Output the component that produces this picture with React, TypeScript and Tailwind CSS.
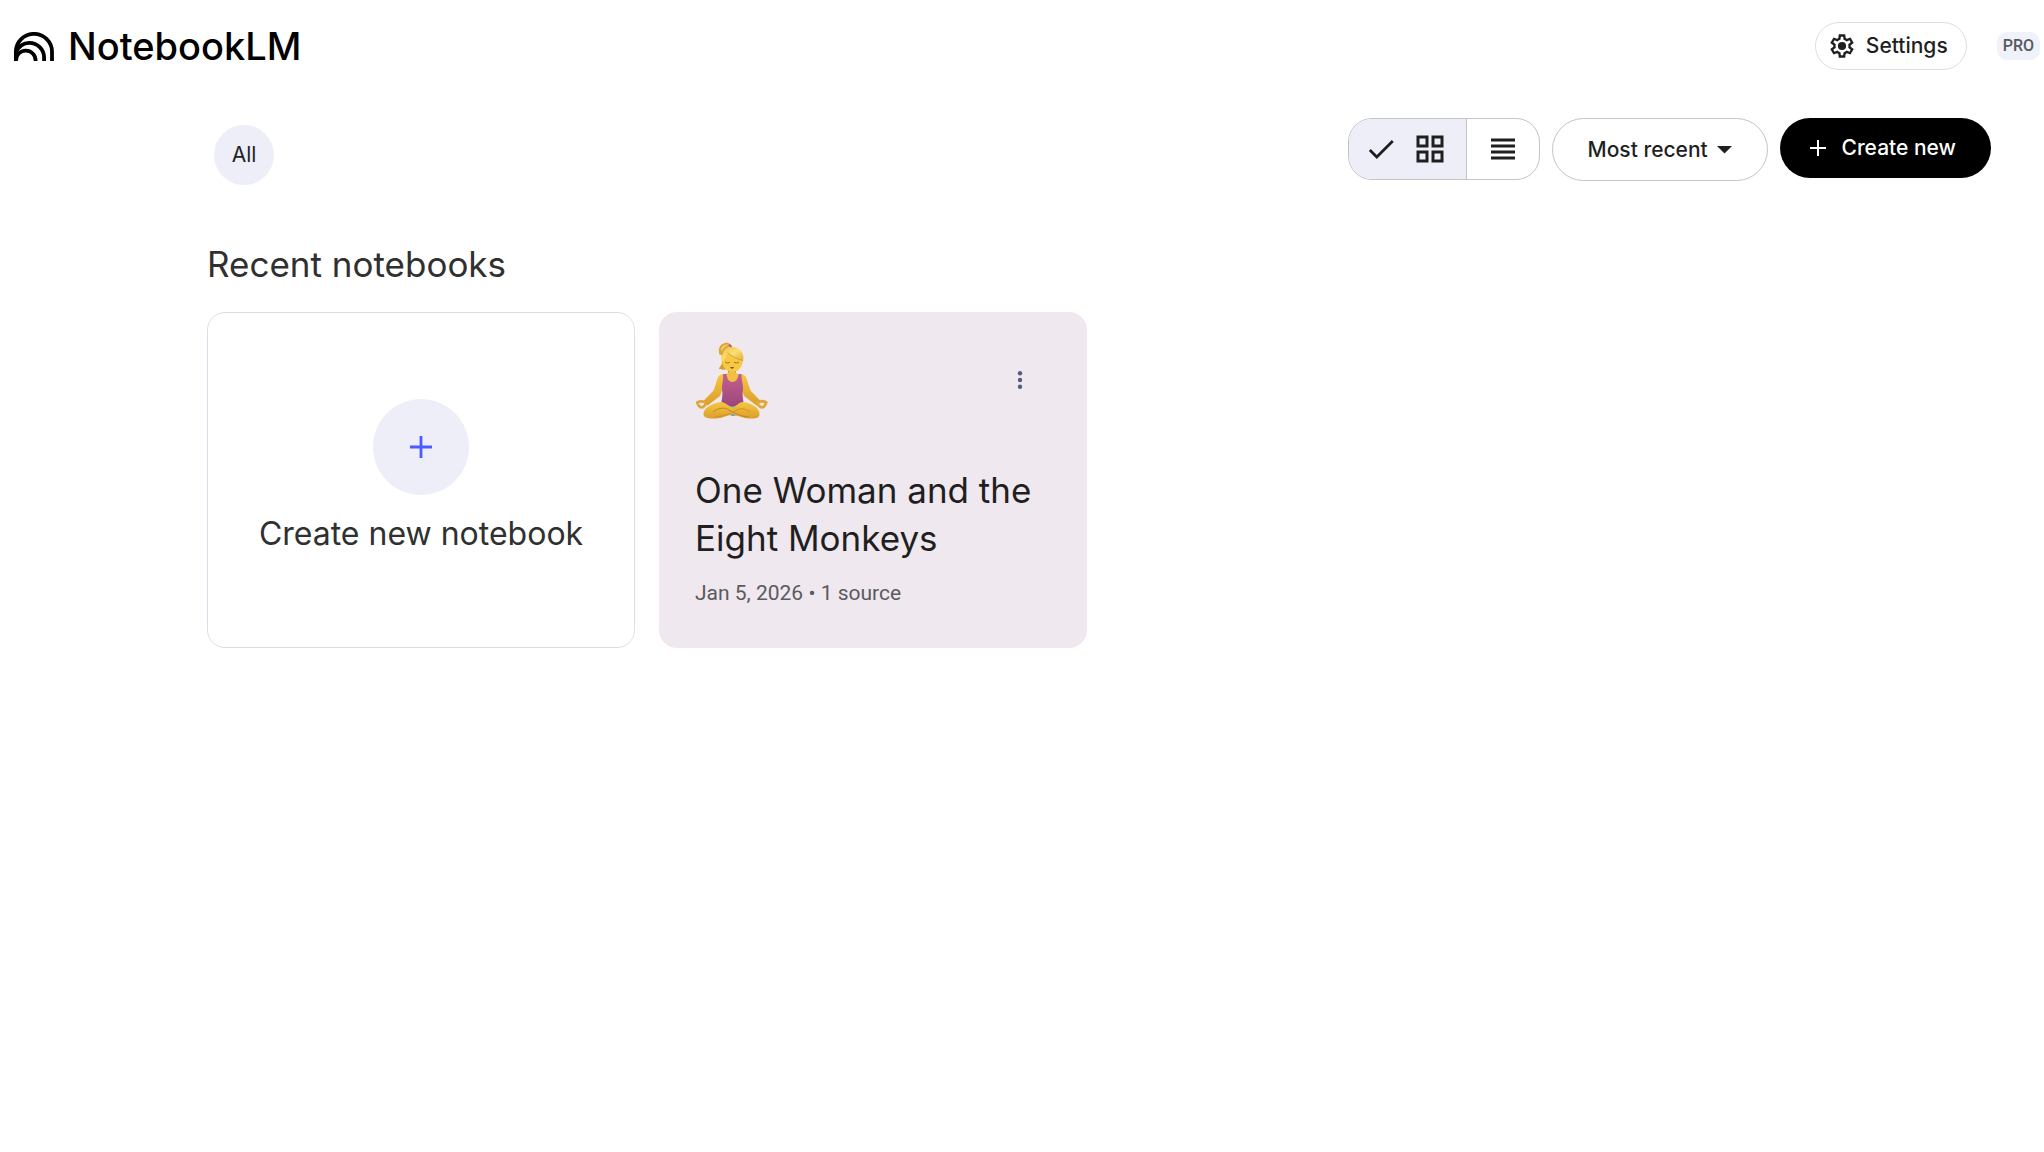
import { useState } from 'react'

interface Notebook {
  title: string
  date: string
  sources: string
}

const notebooks: Notebook[] = [
  { title: 'One Woman and the Eight Monkeys', date: 'Jan 5, 2026', sources: '1 source' },
]

function LogoMark() {
  return (
    <svg width="40" height="29" viewBox="0 0 40 29" fill="none" stroke="currentColor" strokeWidth="3.8" aria-hidden="true">
      <path d="M1.9 29V19.6A18 17.7 0 0 1 38 19.6V29" />
      <path d="M1.9 20.5C4.5 14.5 9.6 10.8 15.3 10.8A14.8 14.8 0 0 1 30.1 25.6V29" />
      <path d="M1.9 29C1.9 23 6 18.6 11.8 18.6A9.8 9.8 0 0 1 21.6 28.4V29" />
    </svg>
  )
}

function GearIcon() {
  return (
    <svg width="28" height="28" viewBox="0 -960 960 960" fill="currentColor" aria-hidden="true">
      <path d="m370-80-16-128q-13-5-24.5-12T307-235l-119 50L78-375l103-78q-1-7-1-13.5v-27q0-6.5 1-13.5L78-585l110-190 119 50q11-8 23-15t24-12l16-128h220l16 128q13 5 24.5 12t22.5 15l119-50 110 190-103 78q1 7 1 13.5v27q0 6.5-2 13.5l103 78-110 190-118-50q-11 8-23 15t-24 12L590-80H370Zm70-80h79l14-106q31-8 57.5-23.5T639-327l99 41 39-68-86-65q5-14 7-29.5t2-31.5q0-16-2-31.5t-7-29.5l86-65-39-68-99 42q-22-23-48.5-38.5T533-694l-13-106h-79l-14 106q-31 8-57.5 23.5T321-633l-99-41-39 68 86 64q-5 15-7 30t-2 32q0 16 2 31t7 30l-86 65 39 68 99-42q22 23 48.5 38.5T427-266l13 106Z" />
      <circle cx="480" cy="-480" r="140" />
    </svg>
  )
}

function LotusEmoji() {
  return (
    <svg width="74" height="78" viewBox="0 0 74 78" role="img" aria-label="Woman in lotus position">
      <defs>
        <linearGradient id="skin" x1="0" y1="0" x2="0" y2="1">
          <stop offset="0" stopColor="#f5c842" />
          <stop offset="1" stopColor="#dd9d2b" />
        </linearGradient>
        <linearGradient id="hair" x1="0" y1="0" x2="1" y2="1">
          <stop offset="0" stopColor="#e8bd48" />
          <stop offset="0.5" stopColor="#fbdf74" />
          <stop offset="1" stopColor="#e2ab35" />
        </linearGradient>
        <linearGradient id="top" x1="0" y1="0" x2="0" y2="1">
          <stop offset="0" stopColor="#c2608f" />
          <stop offset="1" stopColor="#9d467c" />
        </linearGradient>
      </defs>
      {/* ponytail and neck */}
      <path d="M27 17C28 22 26 25 23.7 27.5C26 29 29.5 29 31.5 28L32 20Z" fill="#d59c30" />
      <path d="M33 28V34H41V28Z" fill="#d9992c" />
      {/* arms */}
      <path d="M28.5 33C24 33.5 22.5 36 21.5 41L18.5 49.5L8 60.5L12.5 64.5L25 55L29 44Z" fill="url(#skin)" />
      <path d="M45.5 33C50 33.5 51.5 36 52.5 41L55.5 49.5L66 60.5L61.5 64.5L49 55L45 44Z" fill="url(#skin)" />
      <path d="M28 33Q33 33 34 31H40Q41 33 46 33L45 43H29Z" fill="#f1c043" />
      {/* tank top */}
      <path d="M28 33H31.5C32 38 34 41 37.5 41C41 41 43 38 43.5 33H46.5C46 38 48.5 43 48 48C46.8 54 48.4 59 49 65H26C26.6 59 28.2 54 27 48C26.5 43 29 38 28 33Z" fill="url(#top)" />
      {/* legs */}
      <path d="M33 65H42L44 74L37.5 75L32 73Z" fill="#4c9fcb" />
      <path d="M26 61C17 62 8.5 67 8.5 73C8.5 77 14 78 21 77.5C27 77 32 74.8 37.5 73.2C43 74.8 48 77 54 77.5C61 78 64.5 77 64.5 73C64.5 67 57 62 48 61C44 61 41 65.5 37.5 66.5C34 65.5 30 61 26 61Z" fill="url(#skin)" />
      <path d="M18 71C23 67 29 66 33 68.5C39 72 46 75.5 54 76" fill="none" stroke="#b97822" strokeWidth="0.8" />
      <path d="M55 71C51 68 46 67 43 68.5L38.5 70.5M20 76C26 75.5 31 74 36 72" fill="none" stroke="#c88a27" strokeWidth="0.8" />
      {/* hands */}
      <g fill="none" stroke="#e0a636" strokeWidth="2.8" strokeLinecap="round" strokeLinejoin="round">
        <path d="M2.2 61.5C5 60 8.5 60 11 62C10 65.5 7.5 66.8 5 66C3.2 65 2.8 63.2 2.2 61.5Z" />
        <path d="M71.2 61.5C68.5 60 65 60 62.5 62C63.5 65.5 66 66.8 68.5 66C70.2 65 70.6 63.2 71.2 61.5Z" />
      </g>
      {/* face */}
      <path d="M27 15C26 24 30 30.5 37 31C44 31 48.3 25 48 16C44 9 31 8 27 15Z" fill="#f6c945" />
      <path d="M30 21.2Q32.4 22.8 34.8 21.4M39 21.4Q41.5 22.8 44 21.2" fill="none" stroke="#9b6a20" strokeWidth="0.9" />
      <path d="M35 26.3Q37 25.6 39.2 26.3Q37.2 29 35 26.3Z" fill="#8d3b2c" />
      <path d="M26.5 20.5C24.5 11 29 5.5 37 5.7C45 6 49.5 12 48.2 19.5C43 18.5 35.5 15 32.5 11.5C32 15 29.5 18 26.5 20.5Z" fill="url(#hair)" />
      <path d="M32.5 11.5C36 15 43 18.5 48 19.5" fill="none" stroke="#c98f2a" strokeWidth="0.7" />
      <path d="M24.8 14C22.8 9.5 24 3.5 28.5 2.4C32 0.8 36.5 2.5 36 6C31 6 28.5 8.5 27.8 13.5Z" fill="#dba63a" />
      <path d="M26 9C26.5 5.5 29.5 3 34 3.6C30.5 4.5 28.5 6.5 27 9.5Z" fill="#f7d669" />
      <path d="M34 3.8L36.6 5.8" stroke="#b3568c" strokeWidth="1.8" />
    </svg>
  )
}

function NotebookCard({ notebook }: { notebook: Notebook }) {
  return (
    <article className="min-h-[336px] rounded-[18px] bg-[#efe8ee] px-9 pt-[29px] pb-9">
      <div className="flex items-center justify-between">
        <LotusEmoji />
        <button type="button" aria-label="Notebook options" className="mr-[7px] flex h-12 w-12 items-center justify-center rounded-full text-[#545c80]">
          <svg width="6" height="18" viewBox="0 0 6 18" fill="currentColor" aria-hidden="true">
            <circle cx="3" cy="2.2" r="2.2" />
            <circle cx="3" cy="9" r="2.2" />
            <circle cx="3" cy="15.8" r="2.2" />
          </svg>
        </button>
      </div>
      <h3 className="mt-[47px] text-[35px] leading-[48px] text-[#1f1f1f]">{notebook.title}</h3>
      <p className="mt-4 font-['Roboto',sans-serif] text-[21px] leading-[30px] text-[#5a5a60]">
        {notebook.date} • {notebook.sources}
      </p>
    </article>
  )
}

export default function App() {
  const [view, setView] = useState<'grid' | 'list'>('grid')

  return (
    <div className="min-h-screen bg-white font-['Inter',sans-serif] text-[#1f1f1f]">
      <header className="flex items-center justify-between py-[22px] pr-1 pl-[14px]">
        <a href="#" className="flex items-center gap-[14px] text-black">
          <LogoMark />
          <span className="text-[38px] leading-[48px] font-medium">NotebookLM</span>
        </a>
        <div className="flex items-center gap-[30px]">
          <button type="button" className="flex h-12 items-center gap-[10px] rounded-full border border-[#dddde9] pr-[18px] pl-3 text-[21px] font-medium">
            <GearIcon />
            Settings
          </button>
          <span className="rounded-[10px] bg-[#eff2f9] px-[6px] font-['Roboto',sans-serif] text-base leading-7 font-medium text-[#57595e]">PRO</span>
        </div>
      </header>

      <main className="pt-[26px] pr-[53px] pl-[207px]">
        {/* Toolbar */}
        <div className="flex items-start justify-between">
          <button type="button" className="mt-[7px] ml-[7px] h-[60px] w-[60px] rounded-full bg-[#eeeef9] text-[21px]">
            All
          </button>
          <div className="flex items-start gap-3">
            <div className="flex h-[62px] overflow-hidden rounded-[24px] border border-[#c4c4c6]">
              <button
                type="button"
                aria-label="Grid view"
                aria-pressed={view === 'grid'}
                onClick={() => setView('grid')}
                className="flex items-center gap-[14px] bg-[#eeeef9] pr-[18px] pl-[15px]"
              >
                <svg width="34" height="34" viewBox="0 0 24 24" fill="currentColor" aria-hidden="true">
                  <path d="M9 16.17 4.83 12l-1.42 1.41L9 19 21 7l-1.41-1.41z" />
                </svg>
                <svg width="36" height="36" viewBox="0 0 24 24" fill="currentColor" aria-hidden="true">
                  <path d="M3 3v8h8V3H3zm6 6H5V5h4v4zm-6 4v8h8v-8H3zm6 6H5v-4h4v4zm4-16v8h8V3h-8zm6 6h-4V5h4v4zm-6 4v8h8v-8h-8zm6 6h-4v-4h4v4z" />
                </svg>
              </button>
              <button
                type="button"
                aria-label="List view"
                aria-pressed={view === 'list'}
                onClick={() => setView('list')}
                className="flex items-center border-l border-[#c4c4c6] px-[18px]"
              >
                <svg width="36" height="36" viewBox="0 0 24 24" fill="currentColor" aria-hidden="true">
                  <path d="M4 15h16v-2H4v2zm0 4h16v-2H4v2zm0-8h16V9H4v2zm0-6v2h16V5H4z" />
                </svg>
              </button>
            </div>

            <div className="relative">
              <select aria-label="Sort notebooks" className="h-[63px] appearance-none rounded-full border border-[#c4c4c6] bg-white pr-[58px] pl-[35px] text-[21px] font-medium">
                <option>Most recent</option>
              </select>
              <svg className="pointer-events-none absolute top-7 right-9" width="15" height="8" viewBox="0 0 15 8" fill="currentColor" aria-hidden="true">
                <path d="M0 0h15L7.5 7.5z" />
              </svg>
            </div>

            <button type="button" className="flex h-[60px] items-center gap-4 rounded-full bg-black pr-[35px] pl-[30px] text-[21px] font-medium text-white">
              <svg width="16" height="16" viewBox="0 0 16 16" fill="currentColor" aria-hidden="true">
                <path d="M7 0h2v7h7v2H9v7H7V9H0V7h7z" />
              </svg>
              Create new
            </button>
          </div>
        </div>

        <h2 className="mt-[55px] mb-6 text-[35px] leading-[48px] text-[#303030]">Recent notebooks</h2>

        <div className="grid grid-cols-4 gap-6">
          <button type="button" className="flex min-h-[336px] flex-col items-center gap-[15px] rounded-[18px] border border-[#dddde9] pt-[86px]">
            <span className="flex h-24 w-24 items-center justify-center rounded-full bg-[#eeeef9] text-[#4b5cff]">
              <svg width="22" height="22" viewBox="0 0 22 22" fill="currentColor" aria-hidden="true">
                <path d="M9.6 0h2.8v9.6H22v2.8h-9.6V22H9.6v-9.6H0V9.6h9.6z" />
              </svg>
            </span>
            <span className="text-[32px] leading-[48px] text-[#303030]">Create new notebook</span>
          </button>
          {notebooks.map((notebook) => (
            <NotebookCard key={notebook.title} notebook={notebook} />
          ))}
        </div>
      </main>
    </div>
  )
}
